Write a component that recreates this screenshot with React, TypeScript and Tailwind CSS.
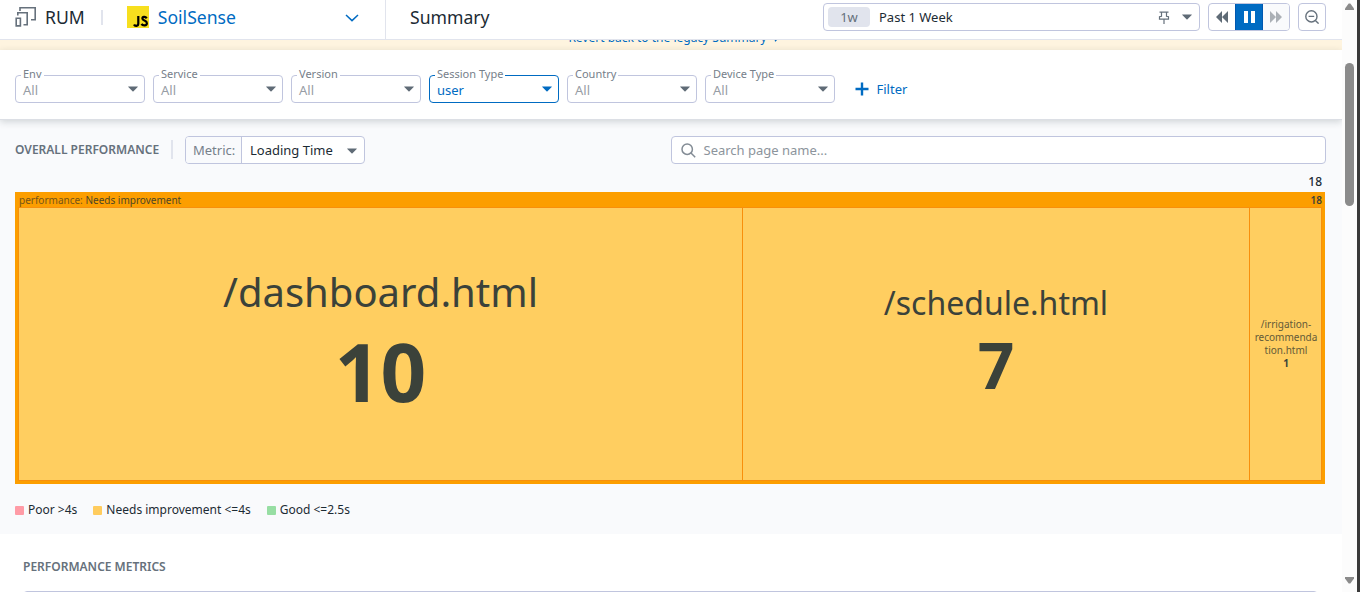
import React from "react";

const Caret = ({ className = "text-[#5f6b76]" }: { className?: string }) => (
  <svg width="10" height="6" viewBox="0 0 10 6" className={"shrink-0 " + className}>
    <path d="M0.6 0.4h8.8c.4 0 .6.4.3.7L5.5 5.3c-.3.3-.7.3-1 0L.3 1.1C0 .8.2.4.6.4z" fill="currentColor" />
  </svg>
);

const filters = [
  { label: "Env", value: "All" },
  { label: "Service", value: "All" },
  { label: "Version", value: "All" },
  { label: "Session Type", value: "user", active: true },
  { label: "Country", value: "All" },
  { label: "Device Type", value: "All" },
];

function Filter({ label, value, active }: { label: string; value: string; active?: boolean }) {
  return (
    <div
      className={
        "relative flex h-7 w-[130px] items-center justify-between rounded-[4px] border pl-[7px] pr-[6px] " +
        (active ? "border-[#006bc2]" : "border-[#c0c5de]")
      }
    >
      <span className="absolute left-[5px] top-[-10px] bg-white px-[2px] text-[11px] leading-4 text-[#76808a]">
        {label}
      </span>
      <span className={"pt-[2px] text-[13px] leading-5 " + (active ? "text-[#006bc2]" : "text-[#979da5]")}>{value}</span>
      <Caret className={active ? "text-[#006bc2]" : "text-[#5f6b76]"} />
    </div>
  );
}

function Header() {
  return (
    <header className="flex h-10 shrink-0 border-b border-[#e1e4ed] bg-white pb-[5px]">
      <div className="-mb-[5px] flex w-[386px] items-center border-r border-[#e1e4ed] pb-[5px] pl-[15px] pr-[26px]">
        <svg width="22" height="22" viewBox="0 0 22 22" fill="none" stroke="#66717c" strokeWidth="1.6">
          <path d="M5 5V1.800h15.200v12h-4.200" />
          <path d="M2.800 9.500V6.800h9.400v11.900H8.500" />
          <path d="M1.200 12.300h4.200v7.600H1.200z" />
        </svg>
        <span className="ml-[8px] text-[17.6px] leading-6 text-[#1c2b34]">RUM</span>
        <span className="ml-[16px] h-[15px] w-[2px] bg-[#e1e4ed]" />
        <span className="ml-[24px] flex h-[22px] w-[22px] items-end justify-end bg-[#f7df1e]">
          <svg width="16" height="13" viewBox="0 0 16 13" fill="none" stroke="#000" strokeWidth="2.2">
            <path d="M5.300 1v7.600c0 2.900-3.400 3-4.300.9" />
            <path d="M13.700 3.400C12.500 1.200 9.300 1.600 9.400 3.700c.2 2.200 4.500 1.700 4.500 4.500 0 2.800-4.200 2.900-5.400.7" />
          </svg>
        </span>
        <span className="ml-[9px] flex-1 text-[17.6px] leading-6 text-[#006bc2]">SoilSense</span>
        <svg width="14" height="8" viewBox="0 0 14 8" fill="none" stroke="#006bc2" strokeWidth="1.5" className="mt-px">
          <path d="M1 1l6 5.600L13 1" />
        </svg>
      </div>
      <h1 className="ml-6 flex-1 self-center text-[17.6px] font-normal leading-6 text-[#1c2b34]">Summary</h1>
      <div className="mr-4 mt-[3px] flex">
        <div className="flex h-7 w-[377px] items-center rounded-[4px] border border-[#c0c5de] pl-1 pr-[7px]">
          <span className="flex h-5 w-[42px] shrink-0 items-center justify-center rounded-[4px] bg-[#e1e4ed] text-[13px] leading-5 text-[#66717c]">1w</span>
          <span className="ml-[9px] flex-1 text-[13px] leading-5 text-[#1c2b34]">Past 1 Week</span>
          <svg width="12" height="13" viewBox="0 0 12 13" fill="none" stroke="#66717c" strokeWidth="1.2" className="mr-[12px]">
            <path d="M1.500 1.200h9M3.500 1.200v4L1.500 5.800v2.300h9V5.800l-2-.6v-4M6 8.200V13" />
          </svg>
          <Caret />
        </div>
        <div className="ml-2 flex h-7 w-[82px] overflow-hidden rounded-[4px] border border-[#c0c5de]">
          <div className="flex w-[26px] items-center justify-center">
            <svg width="12" height="12" viewBox="0 0 12 12" fill="#5f6b76"><path d="M6 0v12L0 6zM12 0v12L6 6z" /></svg>
          </div>
          <div className="-my-px flex w-7 items-center justify-center gap-[3px] border border-[#0058b0] bg-[#006bc2]">
            <span className="h-3 w-[4px] bg-white" />
            <span className="h-3 w-[4px] bg-white" />
          </div>
          <div className="flex flex-1 items-center justify-center bg-[#f9fafc]">
            <svg width="12" height="12" viewBox="0 0 12 12" fill="#abb0b6"><path d="M0 0v12l6-6zM6 0v12l6-6z" /></svg>
          </div>
        </div>
        <div className="ml-2 flex h-7 w-7 items-center justify-center rounded-[4px] border border-[#c0c5de]">
          <svg width="14" height="14" viewBox="0 0 14 14" fill="none" stroke="#66717c" strokeWidth="1.400">
            <circle cx="6.400" cy="6.400" r="5.600" />
            <path d="M10.400 10.400l3.200 3.200M3.600 6.400h5.600" />
          </svg>
        </div>
      </div>
    </header>
  );
}

function Treemap() {
  return (
    <div className="ml-[15px] h-[292px] w-[1310.300px] bg-[#fc9e00] pb-[3px] pl-[3px] pr-[3.300px] text-[#3b423a]">
      <div className="flex h-[15px] items-center justify-between pl-[1px] pt-[2px] text-[10px] leading-[13px]">
        <span className="text-[#75551a]">performance: <span className="text-[#4c4627]">Needs improvement</span></span>
        <span className="font-semibold">18</span>
      </div>
      <div className="flex h-[274px] gap-px border border-[#f88f0c] bg-[#f88f0c] text-center">
        <div className="flex w-[723px] flex-col items-center bg-[#ffce60] pt-[56px]">
          <span className="text-[40px] leading-[56px]">/dashboard.html</span>
          <span className="mt-[9px] text-[80px] font-bold leading-[84px]">10</span>
        </div>
        <div className="flex w-[506px] flex-col items-center bg-[#ffce60] pt-[73px]">
          <span className="text-[32px] leading-[44px]">/schedule.html</span>
          <span className="mt-[5px] text-[64px] font-bold leading-[70px]">7</span>
        </div>
        <div className="flex flex-1 flex-col items-center bg-[#ffce60] pl-px pt-[110px] text-[10px] leading-[13px]">
          <span className="text-[#635a38]">/irrigation-<br />recommenda<br />tion.html</span>
          <span className="font-bold">1</span>
        </div>
      </div>
    </div>
  );
}

const legend = [
  { label: "Poor >4s", color: "bg-[#ff9ba6]" },
  { label: "Needs improvement <=4s", color: "bg-[#ffcc5e]" },
  { label: "Good <=2.5s", color: "bg-[#97dea3]" },
];

export default function App() {
  return (
    <div className="flex h-[592px] w-[1360px] overflow-hidden bg-white font-['Noto_Sans',sans-serif]">
      <div className="flex w-[1342px] flex-col overflow-hidden">
        <Header />
        <div className="flex h-[10px] shrink-0 items-end justify-center overflow-hidden bg-[#fef4df] text-[12px] leading-5 text-[#006bc2]">
          <span className="mb-[2px] flex items-center gap-[7px] pl-[5px]">
            Revert back to the legacy Summary
            <svg width="5" height="8" viewBox="0 0 5 8" fill="none" stroke="currentColor" strokeWidth="1.300"><path d="M1 .8L4 4 1 7.200" /></svg>
          </span>
        </div>
        <div className="relative z-10 flex h-[70px] shrink-0 border-b border-[#dcdfe5] bg-white pl-[15px] pt-[25px] shadow-[0_2px_7px_rgba(28,43,52,0.18)]">
          <div className="flex gap-2">
            {filters.map((f) => <Filter key={f.label} {...f} />)}
          </div>
          <div className="ml-5 flex h-7 items-center gap-2 text-[13px] leading-5 text-[#006bc2]">
            <svg width="14" height="14" viewBox="0 0 14 14" stroke="currentColor" strokeWidth="2.400"><path d="M7 .5v13M.5 7h13" /></svg>
            <span className="-ml-[0.500px]">Filter</span>
          </div>
        </div>
        <section className="h-[414px] shrink-0 bg-[#f9fafc] pt-4">
          <div className="flex h-7 items-center pl-[15px] pr-4">
            <h2 className="w-[145px] whitespace-nowrap text-[12px] font-semibold leading-5 text-[#66717c]">OVERALL PERFORMANCE</h2>
            <span className="mb-px ml-[11px] h-[19px] w-[2px] bg-[#e1e4ed]" />
            <div className="ml-3 flex h-7 w-[180px] items-center rounded-[4px] border border-[#c0c5de] bg-white text-[13px] leading-5">
              <span className="flex h-full w-[56px] items-center rounded-l-[3px] border-r border-[#c0c5de] bg-[#f9fafc] pl-[7px] text-[#76808a]">Metric:</span>
              <span className="ml-2 flex-1 text-[#1c2b34]">Loading Time</span>
              <Caret className="mr-[7px] mt-px text-[#5f6b76]" />
            </div>
            <div className="ml-auto flex h-7 w-[655px] items-center rounded-[4px] border border-[#c0c5de] bg-white pl-[9px] text-[13px] leading-5 text-[#8c949c]">
              <svg width="15" height="15" viewBox="0 0 15 15" fill="none" stroke="#838c95" strokeWidth="1.500" className="mr-[7.500px]">
                <circle cx="6.200" cy="6.200" r="5.200" /><path d="M10 10l4.200 4.200" />
              </svg>
              <span>Search page name...</span>
            </div>
          </div>
          <div className="h-7 pr-[20px] pt-2 text-right text-[12px] font-medium leading-5 text-[#1c2b34]">18</div>
          <Treemap />
          <div className="flex gap-4 pl-[15px] pt-4 text-[12px] leading-5 text-[#1c2b34]">
            {legend.map((l) => (
              <span key={l.label} className="flex items-center gap-1">
                <span className={"h-[9px] w-[9px] rounded-[1px] " + l.color} />
                {l.label}
              </span>
            ))}
          </div>
        </section>
        <section className="h-[58px] pl-[23px] pr-[24px] pt-[23px]">
          <h2 className="text-[12px] font-semibold leading-5 text-[#66717c]">PERFORMANCE METRICS</h2>
          <div className="mt-[14px] h-3 rounded-[4px] border border-[#c0c5de]" />
        </section>
      </div>
      <div className="flex w-[15px] flex-col items-center bg-[#fcfcfc]">
        <svg width="9" height="7" viewBox="0 0 9 7" className="mt-[3px]"><path d="M3.700.5h1.600L9 5.500V7H0V5.500z" fill="#8b8b8b" /></svg>
        <div className="mt-[53px] h-[143px] w-[9px] rounded-full bg-[#8b8b8b]" />
        <svg width="9" height="7" viewBox="0 0 9 7" className="mb-2 mt-auto"><path d="M0 0h9v1.500L5.300 6.500H3.700L0 1.500z" fill="#8b8b8b" /></svg>
      </div>
      <div className="w-[3px] bg-[#3a3a3a]" />
    </div>
  );
}
